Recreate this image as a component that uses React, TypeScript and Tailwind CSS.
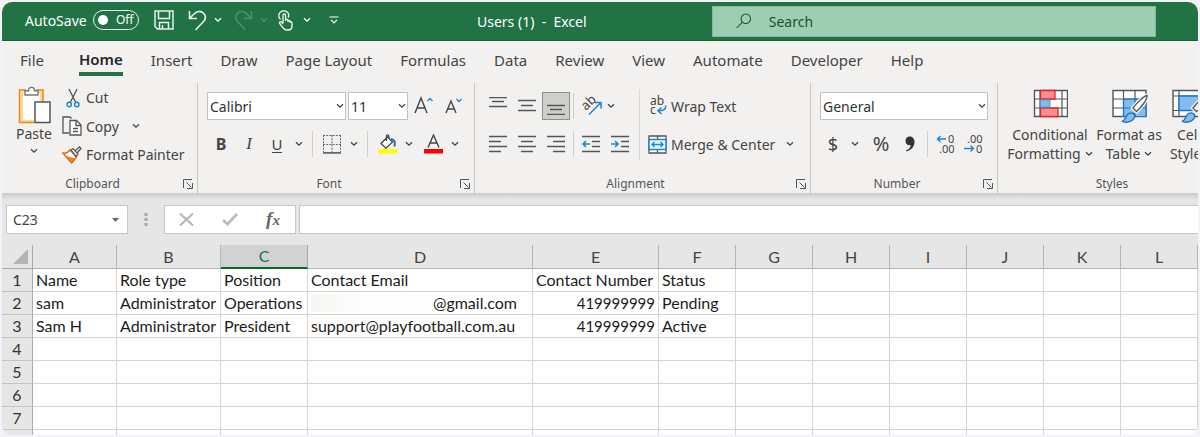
import React from "react";

const ink = "#444444";
const blue = "#1a86d0";

const Chevron = ({ className = "" }: { className?: string }) => (
  <svg className={`shrink-0 ${className}`} width="8" height="6" viewBox="0 0 8 6" fill="none" aria-hidden="true">
    <path d="M1 1.2 4 4.2 7 1.2" stroke="currentColor" strokeWidth="1.3" />
  </svg>
);

const MenuArrow = ({ label, className = "" }: { label: string; className?: string }) => (
  <button type="button" aria-label={label} className={`flex h-7 shrink-0 items-center justify-center ${className}`}>
    <Chevron />
  </button>
);

const IconButton = ({
  label,
  className = "w-7",
  children,
}: {
  label: string;
  className?: string;
  children: React.ReactNode;
}) => (
  <button type="button" aria-label={label} className={`flex h-7 shrink-0 items-center justify-center ${className}`}>
    {children}
  </button>
);

const Divider = ({ className = "mx-1" }: { className?: string }) => (
  <span className={`h-[26px] w-px shrink-0 bg-[#d0cecc] ${className}`} />
);

const Group = ({
  name,
  className,
  launcher = true,
  children,
}: {
  name: string;
  className: string;
  launcher?: boolean;
  children: React.ReactNode;
}) => (
  <section aria-label={name} className={`flex shrink-0 flex-col ${className}`}>
    <div className="h-[93px]">{children}</div>
    <div className="flex h-4 items-center text-[12px] leading-4 text-[#555]">
      <span className="flex-1 text-center">{name}</span>
      {launcher && (
        <button type="button" aria-label={`${name} settings`} className="flex w-3.5 items-center">
          <svg width="10" height="10" viewBox="0 0 10 10" fill="none" stroke="#555" aria-hidden="true">
            <path d="M.5 9V.5H9M3.5 3.5 8.5 8.5M9.5 4V9.5H4" />
          </svg>
        </button>
      )}
    </div>
  </section>
);

const Select = ({ label, value, className }: { label: string; value: string; className: string }) => (
  <div className={`relative h-7 ${className}`}>
    <select
      aria-label={label}
      defaultValue={value}
      className="h-full w-full appearance-none border border-[#c3c1bf] bg-white pl-0.5 text-[14px] text-[#333]"
    >
      <option>{value}</option>
    </select>
    <Chevron className="pointer-events-none absolute right-0.5 top-[11px]" />
  </div>
);

const Lines = ({ d }: { d: string }) => (
  <svg width="18" height="18" viewBox="0 0 18 18" fill="none" stroke="#555" strokeWidth="1.3" aria-hidden="true">
    <path d={d} />
  </svg>
);

const TitleBar = () => (
  <header className="flex h-[39px] shrink-0 items-center border-b border-[#0b6a2b] bg-[#217346] text-[14px] text-white">
    <div className="flex w-[475px] shrink-0 items-center pb-0.5 pl-[23px]">
      <label htmlFor="autosave" className="w-[68px]">
        AutoSave
      </label>
      <span className="relative flex h-5 w-[46px] items-center rounded-full border-[1.5px] border-white/90">
        <input
          id="autosave"
          type="checkbox"
          role="switch"
          className="ml-1 size-2.5 appearance-none rounded-full bg-white"
        />
        <span className="ml-2 text-[12px]">Off</span>
      </span>
      <button type="button" aria-label="Save" className="ml-[15px]">
        <svg width="20" height="20" viewBox="0 0 20 20" fill="none" stroke="#e9f2ec" strokeWidth="1.5" aria-hidden="true">
          <path d="M1 1H19V19H3.5L1 16.5ZM4.5 1V8.5H15.5V1M5.5 19V12.5H14.5V19M8.5 15V19" />
        </svg>
      </button>
      <button type="button" aria-label="Undo" className="ml-3.5">
        <svg width="19" height="21" viewBox="0 0 19 21" fill="none" stroke="#e9f2ec" strokeWidth="1.6" aria-hidden="true">
          <path d="M1.5 1V8.5H9M1.5 8.5 6 4C9 .8 13 .6 15.5 3.2 18 5.8 17.8 9 15.5 11.5L7.5 20" />
        </svg>
      </button>
      <MenuArrow label="Undo list" className="ml-[3px] w-4" />
      <button type="button" aria-label="Redo" className="ml-2 text-[#4d9069]">
        <svg width="19" height="21" viewBox="0 0 19 21" fill="none" stroke="currentColor" strokeWidth="1.5" aria-hidden="true">
          <path d="M17.5 1V8.5H10M17.5 8.5 13 4C10 .8 6 .6 3.5 3.2 1 5.8 1.2 9 3.5 11.5L11.5 20" />
        </svg>
      </button>
      <MenuArrow label="Redo list" className="ml-[3px] w-4 text-[#4d9069]" />
      <button type="button" aria-label="Touch mode" className="ml-1.5">
        <svg width="15" height="21" viewBox="0 0 15 21" fill="none" stroke="#e9f2ec" strokeWidth="1.4" aria-hidden="true">
          <path d="M2.5 9.5C.2 7.5.2 4 2.3 2.2 4.5.2 8 .4 9.8 2.6 11 4.2 11 6 10.2 7.6" />
          <path d="M5 13.5V5.2C5 3.6 7.6 3.6 7.6 5.2V11M7.6 9.7C8.5 9 9.9 9.4 10 10.6V12M10 10.8C11 10.2 12 10.6 12.1 11.6V13M12.1 12C13.2 11.5 14 12 14 13V16C14 18.6 12.6 20 10 20H8.5C6.6 20 5.6 19 4.4 17.2L1.6 13.4C1 12.2 2.4 11.2 3.4 12.1L5 13.8" />
        </svg>
      </button>
      <MenuArrow label="Touch mode list" className="ml-1.5 w-4" />
      <button type="button" aria-label="Customize toolbar" className="ml-3.5">
        <svg width="10" height="8" viewBox="0 0 10 8" fill="none" stroke="#fff" strokeWidth="1.2" aria-hidden="true">
          <path d="M.5 1H9.5M2 3.8 5 6.8 8 3.8" />
        </svg>
      </button>
    </div>
    <h1 className="w-[235px] shrink-0 whitespace-pre">Users (1)  -  Excel</h1>
    <label className="mr-[42px] flex h-[31px] flex-1 items-center border border-[#7dbb97] bg-[#9fcdb3] text-[#12562e]">
      <svg className="ml-[23px]" width="18" height="18" viewBox="0 0 18 18" fill="none" stroke="#12562e" strokeWidth="1.2" aria-hidden="true">
        <circle cx="11.2" cy="6.4" r="5.4" />
        <path d="M7.3 10.2.8 17" />
      </svg>
      <input
        aria-label="Search"
        placeholder="Search"
        className="ml-[17px] w-full bg-transparent text-[14px] outline-none placeholder:text-[#12562e]"
      />
    </label>
  </header>
);

const tabs = [
  "Home",
  "Insert",
  "Draw",
  "Page Layout",
  "Formulas",
  "Data",
  "Review",
  "View",
  "Automate",
  "Developer",
  "Help",
];

const Tabs = () => (
  <nav className="flex h-10 shrink-0 items-start gap-7 pl-[18px] pt-1.5 text-[15px] text-[#444]">
    <button type="button" className="mr-[7px] h-[26px]">
      File
    </button>
    {tabs.map((tab) => (
      <button
        key={tab}
        type="button"
        className={
          tab === "Home"
            ? "h-[29px] whitespace-nowrap border-b-4 border-[#217346] font-semibold text-[#262626]"
            : "h-[26px] whitespace-nowrap"
        }
      >
        {tab}
      </button>
    ))}
  </nav>
);

const Clipboard = () => (
  <Group name="Clipboard" className="w-[196px] border-r border-[#c8c6c4]">
    <div className="flex">
      <button type="button" className="flex w-[60px] flex-col items-center pl-1 pt-[3px]">
        <svg width="34" height="38" viewBox="0 0 34 38" fill="none" aria-hidden="true">
          <path d="M4.500 5.500H24.500V35.500H4.500Z" fill="#fff" stroke="#fbd99a" strokeWidth="3" />
          <path d="M9 4H2.500V36.500H17M19 4H26V16" stroke="#e88a1a" strokeWidth="1.500" />
          <path d="M8 9V4.700H11.500C11.500 .2 17.500 .2 17.500 4.700H21V9Z" fill="#fff" stroke="#777" strokeWidth="1.400" />
          <path d="M18 16H33V36.500H18Z" fill="#fff" stroke="#555" strokeWidth="1.500" />
        </svg>
        <span className="text-[14px] leading-5">Paste</span>
        <Chevron className="mt-1" />
      </button>
      <div className="flex flex-col items-start text-[14px] leading-[29px]">
        <button type="button" className="flex h-[29px] items-center gap-1.5">
          <svg className="ml-1" width="14" height="20" viewBox="0 0 14 20" fill="none" aria-hidden="true">
            <path d="M3 1 9.500 14M11 1 4.500 14" stroke="#555" strokeWidth="1.300" />
            <circle cx="3.200" cy="16.500" r="2.200" stroke={blue} strokeWidth="1.400" />
            <circle cx="10.800" cy="16.500" r="2.200" stroke={blue} strokeWidth="1.400" />
          </svg>
          Cut
        </button>
        <div className="flex h-7 items-center">
          <button type="button" className="flex w-16 items-center gap-1">
            <svg width="20" height="20" viewBox="0 0 20 20" fill="none" stroke="#555" strokeWidth="1.300" aria-hidden="true">
              <path d="M7 17H1V1H8L9.500 2.500" />
              <path d="M8 4.500H14.500L19 9V19H8Z" fill="#fff" />
              <path d="M14 4.500V9.500H19M11 12.500H16M11 15.500H16" />
            </svg>
            Copy
          </button>
          <MenuArrow label="Copy options" className="w-5" />
        </div>
        <button type="button" className="flex h-[29px] items-center gap-1 whitespace-nowrap">
          <svg width="20" height="18" viewBox="0 0 20 18" fill="none" aria-hidden="true">
            <path d="M1 7C4 7.500 6.500 6 8 4L14.500 11C13 13 11 16 9.500 17L1 7Z" fill="#fff" stroke="#e06c10" strokeWidth="1.400" />
            <path d="M4 10.500 12.500 13 9.500 16.500Z" fill="#f0862a" stroke="#e06c10" />
            <path d="M9 4 11 2.500 16 8 14 10.500ZM13 5 17.500 1 19 2.500 15 7" fill="#fff" stroke="#555" strokeWidth="1.300" />
          </svg>
          Format Painter
        </button>
      </div>
    </div>
  </Group>
);

const Font = () => (
  <Group name="Font" className="w-[277px] border-r border-[#c8c6c4]">
    <div className="mt-[9px] flex h-7 items-center pl-[9px]">
      <Select label="Font name" value="Calibri" className="w-[139px]" />
      <Select label="Font size" value="11" className="ml-0.5 w-[60px]" />
      <IconButton label="Increase font size" className="w-8">
        <svg width="20" height="20" viewBox="0 0 20 20" fill="none" aria-hidden="true">
          <path d="M1 17 7 2 13 17M3.200 12H10.800" stroke={ink} strokeWidth="1.400" />
          <path d="M13.500 5 16 2.500 18.500 5" stroke={blue} strokeWidth="1.400" />
        </svg>
      </IconButton>
      <IconButton label="Decrease font size" className="w-7">
        <svg width="18" height="20" viewBox="0 0 18 20" fill="none" aria-hidden="true">
          <path d="M1 17 6 5 11 17M2.800 13H9.200" stroke={ink} strokeWidth="1.400" />
          <path d="M11.500 3 14 5.500 16.500 3" stroke={blue} strokeWidth="1.400" />
        </svg>
      </IconButton>
    </div>
    <div className="mt-2.5 flex h-7 items-center pl-[9px]">
      <IconButton label="Bold">
        <span className="text-[16px] font-bold">B</span>
      </IconButton>
      <IconButton label="Italic">
        <span className="font-['Liberation_Serif',serif] text-[17px] italic">I</span>
      </IconButton>
      <IconButton label="Underline">
        <span className="border-b border-[#444] text-[15px] leading-4">U</span>
      </IconButton>
      <MenuArrow label="Underline styles" className="w-4" />
      <Divider className="mx-[5px]" />
      <IconButton label="Borders">
        <svg width="18" height="19" viewBox="0 0 18 19" fill="none" stroke="#666" aria-hidden="true">
          <path d="M0 .5H18M0 9.500H18M.5 0V17M9 0V17M17.500 0V17" strokeDasharray="2 1.200" />
          <path d="M0 17.800H18" strokeWidth="1.800" />
        </svg>
      </IconButton>
      <MenuArrow label="Border styles" className="w-4" />
      <Divider className="mx-[5px]" />
      <IconButton label="Fill color">
        <svg width="19" height="20" viewBox="0 0 19 20" fill="none" aria-hidden="true">
          <path d="M3 9.500 9.500 3 14.500 8 8 14.200ZM8.500 7V2C8.500 .5 11 .5 11 2.500V4.500" fill="#fff" stroke={ink} strokeWidth="1.300" />
          <path d="M13 5C16.500 5.500 17.500 8 16.500 12.500" stroke="#1a6fb8" strokeWidth="2" />
          <path d="M0 15H19V19.500H0Z" fill="#ffff00" />
        </svg>
      </IconButton>
      <MenuArrow label="Fill colors" className="w-4" />
      <IconButton label="Font color" className="w-8">
        <svg width="19" height="20" viewBox="0 0 19 20" fill="none" aria-hidden="true">
          <path d="M4 13.500 9.500 1 15 13.500M6 9H13" stroke={ink} strokeWidth="1.400" />
          <path d="M0 15H19V19.500H0Z" fill="#ff0000" />
        </svg>
      </IconButton>
      <MenuArrow label="Font colors" className="w-3" />
    </div>
  </Group>
);

const Alignment = () => (
  <Group name="Alignment" className="w-[336px] border-r border-[#c8c6c4]">
    <div className="flex h-full">
      <div className="w-[164px] shrink-0 pl-[9px]">
        <div className="mt-[9px] flex h-7 items-center gap-px">
          <IconButton label="Top align">
            <Lines d="M0 .5H18M3 4.500H15M0 9.500H18" />
          </IconButton>
          <IconButton label="Middle align">
            <Lines d="M0 3.500H18M3 8.500H15M0 13.500H18" />
          </IconButton>
          <IconButton label="Bottom align" className="w-7 border border-[#8f8f8d] bg-[#cfcfcc]">
            <Lines d="M0 8.500H18M3 12.500H15M0 17.300H18" />
          </IconButton>
          <Divider className="mx-0.5" />
          <IconButton label="Orientation">
            <svg className="overflow-visible" width="21" height="20" viewBox="0 0 21 20" fill="none" aria-hidden="true">
              <text x="5" y="15" transform="rotate(-45 5 15)" fontSize="13" fill={ink}>
                ab
              </text>
              <path d="M8 18.500 19.500 7M14 6.500H20V12.500" stroke={blue} strokeWidth="1.500" />
            </svg>
          </IconButton>
          <MenuArrow label="Orientation options" className="w-2.5" />
        </div>
        <div className="mt-2.5 flex h-7 items-center gap-px">
          <IconButton label="Align left">
            <Lines d="M0 1.500H18M0 6.500H12M0 11.500H18M0 16.500H12" />
          </IconButton>
          <IconButton label="Center">
            <Lines d="M0 1.500H18M3 6.500H15M0 11.500H18M3 16.500H15" />
          </IconButton>
          <IconButton label="Align right">
            <Lines d="M0 1.500H18M6 6.500H18M0 11.500H18M6 16.500H18" />
          </IconButton>
          <Divider className="mx-0.5" />
          <IconButton label="Decrease indent">
            <svg width="18" height="18" viewBox="0 0 18 18" fill="none" strokeWidth="1.300" aria-hidden="true">
              <path d="M0 1.500H18M10 6.500H18M10 11.500H18M0 16.500H18" stroke="#555" />
              <path d="M8 9H1M4 6 1 9 4 12" stroke={blue} strokeWidth="1.500" />
            </svg>
          </IconButton>
          <IconButton label="Increase indent">
            <svg width="18" height="18" viewBox="0 0 18 18" fill="none" strokeWidth="1.300" aria-hidden="true">
              <path d="M0 1.500H18M10 6.500H18M10 11.500H18M0 16.500H18" stroke="#555" />
              <path d="M0 9H7M4 6 7 9 4 12" stroke={blue} strokeWidth="1.500" />
            </svg>
          </IconButton>
        </div>
      </div>
      <span className="mt-1.5 h-[71px] w-px bg-[#d8d6d4]" />
      <div className="pl-2 text-[14px]">
        <button type="button" className="mt-[9px] flex h-7 items-center gap-1 whitespace-nowrap">
          <svg className="overflow-visible" width="19" height="20" viewBox="0 0 19 20" fill="none" aria-hidden="true">
            <text x="2" y="9" fontSize="12" fill={ink}>
              ab
            </text>
            <text x="2" y="18" fontSize="12" fill={ink}>
              c
            </text>
            <path d="M17.500 9.500C18.500 13.500 15 14.800 10.500 14.800M13.500 11.500 10 14.800 13.500 18" stroke={blue} strokeWidth="1.500" />
          </svg>
          Wrap Text
        </button>
        <div className="mt-2.5 flex h-7 items-center">
          <button type="button" className="flex w-[134px] items-center gap-1 whitespace-nowrap">
            <svg width="19" height="19" viewBox="0 0 19 19" fill="#fff" aria-hidden="true">
              <path d="M1 1H18V18H1ZM9.500 1V5M9.500 14V18" stroke="#555" strokeWidth="1.300" />
              <path d="M1 4.500H18V14.500H1Z" fill="#eaf5fd" stroke={blue} strokeWidth="1.500" />
              <path d="M4 9.500H15M6.500 7 4 9.500 6.500 12M12.500 7 15 9.500 12.500 12" fill="none" stroke={blue} strokeWidth="1.300" />
            </svg>
            Merge &amp; Center
          </button>
          <MenuArrow label="Merge options" className="w-4" />
        </div>
      </div>
    </div>
  </Group>
);

const NumberFormat = () => (
  <Group name="Number" className="w-[187px] border-r border-[#c8c6c4]">
    <div className="mt-[9px] flex h-7 pl-[9px]">
      <Select label="Number format" value="General" className="w-[168px]" />
    </div>
    <div className="mt-2.5 flex h-7 items-center pl-[10px]">
      <IconButton label="Accounting format" className="w-6">
        <span className="text-[18px]">$</span>
      </IconButton>
      <MenuArrow label="Currencies" className="w-5" />
      <IconButton label="Percent style" className="w-8">
        <span className="text-[20px]">%</span>
      </IconButton>
      <IconButton label="Comma style" className="w-[26px]">
        <svg width="10" height="16" viewBox="0 0 10 16" fill="#333" aria-hidden="true">
          <path d="M4.500 .5C7.500 .5 9.500 2.500 9.500 6 9.500 10.500 6.500 14 1.500 15.500L1 14.500C4 13 5.500 11.500 5.800 9.200 2.500 10 .5 7.800 .5 5 .5 2.500 2.200 .5 4.500 .5Z" />
        </svg>
      </IconButton>
      <Divider />
      <IconButton label="Increase decimal">
        <svg className="overflow-visible" width="20" height="20" viewBox="0 0 20 20" fill="none" aria-hidden="true">
          <text x="12" y="9" fontSize="11" fill={ink}>
            0
          </text>
          <text x="3" y="18.500" fontSize="11" fill={ink}>
            .00
          </text>
          <path d="M10 5H1.500M4.500 2 1.500 5 4.500 8" stroke={blue} strokeWidth="1.400" />
        </svg>
      </IconButton>
      <IconButton label="Decrease decimal">
        <svg className="overflow-visible" width="20" height="20" viewBox="0 0 20 20" fill="none" aria-hidden="true">
          <text x="3" y="9" fontSize="11" fill={ink}>
            .00
          </text>
          <text x="12" y="18.500" fontSize="11" fill={ink}>
            0
          </text>
          <path d="M0 14.500H9.500M6.500 11.500 9.500 14.500 6.500 17.500" stroke={blue} strokeWidth="1.400" />
        </svg>
      </IconButton>
    </div>
  </Group>
);

const Brush = () => (
  <>
    <path d="M37 9.500C33 10.500 26 18 23 22L26.500 25.500C31 21.500 37.500 13.500 37 9.500Z" fill="#fff" stroke="#f3f1f0" strokeWidth="4" />
    <path d="M37 9.500C33 10.500 26 18 23 22L26.500 25.500C31 21.500 37.500 13.500 37 9.500Z" fill="#fff" stroke="#555" strokeWidth="1.300" />
    <path d="M12 35.500C15.500 35 15 30 18.500 27.500 22 26 26 28 24.500 31.500 22 36.500 16 37 12 35.500Z" fill="#83bdf0" stroke="#1a6fb8" strokeWidth="1.300" />
  </>
);

const styleButton = "flex shrink-0 flex-col items-center whitespace-nowrap pt-[3px] text-[14px] leading-[19px]";

const Styles = () => (
  <Group name="Styles" className="w-[228px]" launcher={false}>
    <div className="flex pl-2.5">
      <button type="button" className={`w-[84px] ${styleButton}`}>
        <svg className="mb-px" width="36" height="38" viewBox="0 0 36 38" fill="none" aria-hidden="true">
          <path d="M2.500 4.500H35.500V30.500H2.500Z" fill="#fff" stroke="#555" strokeWidth="1.400" />
          <path d="M2.500 13H35.500M2.500 22H35.500M8 4.500V30.500M30 4.500V30.500" stroke="#555" strokeWidth="1.200" />
          <path d="M8.500 4.500H23V13H8.500ZM8.500 22H26V30.500H8.500Z" fill="#fb8d92" stroke="#e0262e" strokeWidth="1.300" />
          <path d="M8.500 14H18V21H8.500Z" fill="#83bdf0" stroke="#4a96d6" />
        </svg>
        <span>Conditional</span>
        <span className="flex items-center gap-1">
          Formatting <Chevron />
        </span>
      </button>
      <button type="button" className={`w-[74px] ${styleButton}`}>
        <svg className="mb-px" width="38" height="38" viewBox="0 0 38 38" fill="none" aria-hidden="true">
          <path d="M3 4.500H36V30.500H3Z" fill="#fff" stroke="#555" strokeWidth="1.400" />
          <path d="M13.500 13H36V30.500H13.500Z" fill="#83bdf0" />
          <path d="M3 13H36M3 22H13.500M13.500 4.500V30.500M25 4.500V13" stroke="#555" strokeWidth="1.200" />
          <path d="M13.500 30.500V13H36V30.500ZM13.500 22H36M25 13V30.500" stroke="#1a78c8" strokeWidth="1.200" />
          <Brush />
        </svg>
        <span>Format as</span>
        <span className="flex items-center gap-1">
          Table <Chevron />
        </span>
      </button>
      <button type="button" className={`w-[46px] ${styleButton}`}>
        <svg className="mb-px" width="38" height="38" viewBox="0 0 38 38" fill="none" aria-hidden="true">
          <path d="M3 4.500H37V30.500H3Z" fill="#fff" stroke="#555" strokeWidth="1.400" />
          <path d="M3 10H37M3 24.500H37M9 4.500V30.500M32 4.500V30.500" stroke="#555" strokeWidth="1.200" />
          <path d="M9 10H32V24.500H9Z" fill="#83bdf0" stroke="#1a78c8" strokeWidth="1.300" />
          <Brush />
        </svg>
        <span>Cell</span>
        <span>Styles</span>
      </button>
    </div>
  </Group>
);

const FormulaBar = () => (
  <div className="flex h-[52px] shrink-0 items-start bg-linear-to-b from-[#cbcbcb] to-[#e6e6e6] to-12% pl-1 pt-3 text-[#444]">
    <div className="flex h-[29px] w-[122px] items-center border border-[#c6c6c6] bg-white">
      <input aria-label="Name box" defaultValue="C23" className="w-full min-w-0 pl-1.5 text-[14px] outline-none" />
      <svg className="mr-2 shrink-0" width="7" height="4" viewBox="0 0 7 4" fill="#666" aria-hidden="true">
        <path d="M0 0H7L3.500 4Z" />
      </svg>
    </div>
    <svg className="mx-4 mt-2" width="4" height="13" viewBox="0 0 4 13" fill="#a6a6a6" aria-hidden="true">
      <path d="M.5 0H3.500V3H.5ZM.5 5H3.500V8H.5ZM.5 10H3.500V13H.5Z" />
    </svg>
    <div className="flex h-[29px] w-[132px] items-center border border-[#c6c6c6] bg-white">
      <IconButton label="Cancel" className="w-[42px]">
        <svg width="15" height="13" viewBox="0 0 15 13" stroke="#b5b5b5" strokeWidth="2" aria-hidden="true">
          <path d="M1 .5 14 12.500M14 .5 1 12.500" />
        </svg>
      </IconButton>
      <IconButton label="Enter" className="w-[45px]">
        <svg width="16" height="13" viewBox="0 0 16 13" fill="none" stroke="#bcbcbc" strokeWidth="2.800" aria-hidden="true">
          <path d="M1 7 5.500 11 15 1" />
        </svg>
      </IconButton>
      <IconButton label="Insert function" className="w-[42px]">
        <span className="font-['Liberation_Serif',serif] text-[19px] font-bold italic leading-7 text-[#666]">
          f<span className="text-[15px]">x</span>
        </span>
      </IconButton>
    </div>
    <input
      aria-label="Formula"
      className="ml-[3px] h-[29px] min-w-0 flex-1 border border-r-0 border-[#c6c6c6] bg-white px-2 text-[14px] outline-none"
    />
  </div>
);

const columns = [
  { name: "A", width: "w-[84px]" },
  { name: "B", width: "w-[104px]" },
  { name: "C", width: "w-[87px]" },
  { name: "D", width: "w-[225px]" },
  { name: "E", width: "w-[126px]" },
  { name: "F", width: "" },
  { name: "G", width: "" },
  { name: "H", width: "" },
  { name: "I", width: "" },
  { name: "J", width: "" },
  { name: "K", width: "" },
  { name: "L", width: "" },
];

const rows: string[][] = [
  ["Name", "Role type", "Position", "Contact Email", "Contact Number", "Status"],
  ["sam", "Administrator", "Operations", "@gmail.com", "419999999", "Pending"],
  ["Sam H", "Administrator", "President", "support@playfootball.com.au", "419999999", "Active"],
  [],
  [],
  [],
  [],
  [],
];

const Sheet = () => (
  <div className="min-h-0 flex-1 overflow-hidden bg-white">
    <table className="w-full table-fixed border-separate border-spacing-0 font-[Lato,sans-serif] text-[16px] text-[#1c1c1c]">
      <thead>
        <tr className="h-6 bg-[#e6e6e6] leading-[22px] text-[#444]">
          <th aria-label="Select all" className="w-[31px] border-b border-r border-[#ababab] p-0">
            <svg className="ml-auto mr-1" width="15" height="15" viewBox="0 0 15 15" fill="#b4b4b4" aria-hidden="true">
              <path d="M15 0V15H0Z" />
            </svg>
          </th>
          {columns.map(({ name, width }) => (
            <th
              key={name}
              scope="col"
              className={`p-0 font-normal ${width} ${
                name === "C"
                  ? "border-b-2 border-r border-b-[#0b6a2b] border-r-[#ababab] bg-[#d2d2d2] text-[#217346]"
                  : "border-b border-r border-[#b5b5b5]"
              }`}
            >
              {name}
            </th>
          ))}
        </tr>
      </thead>
      <tbody>
        {rows.map((row, r) => (
          <tr key={r} className="h-[23px] leading-5">
            <th scope="row" className="border-b border-r border-b-[#c4c4c4] border-r-[#ababab] bg-[#e6e6e6] p-0 font-normal text-[#333]">
              {r + 1}
            </th>
            {columns.map(({ name }, c) => {
              const text = row[c] ?? "";
              const masked = text.startsWith("@");
              return (
                <td
                  key={name}
                  className={`whitespace-nowrap border-b border-r border-[#d4d4d4] p-0 px-[3px] ${
                    /^\d+$/.test(text) ? "text-right text-[15px]" : ""
                  }`}
                >
                  {masked ? (
                    <span className="flex items-center">
                      <span className="h-[18px] w-[122px] bg-linear-to-r from-[#f8f6f2] to-[#fefefd] to-50%" />
                      {text}
                    </span>
                  ) : (
                    text
                  )}
                </td>
              );
            })}
          </tr>
        ))}
      </tbody>
    </table>
  </div>
);

export default function App() {
  return (
    <div className="h-screen bg-[#f2f2f8] p-0.5 font-['Noto_Sans',sans-serif] text-[#444]">
      <main className="flex h-full flex-col overflow-hidden rounded-[10px] bg-[#f3f1f0]">
        <TitleBar />
        <Tabs />
        <div className="flex h-28 shrink-0 overflow-hidden pt-0.5">
          <Clipboard />
          <Font />
          <Alignment />
          <NumberFormat />
          <Styles />
        </div>
        <FormulaBar />
        <Sheet />
      </main>
    </div>
  );
}
